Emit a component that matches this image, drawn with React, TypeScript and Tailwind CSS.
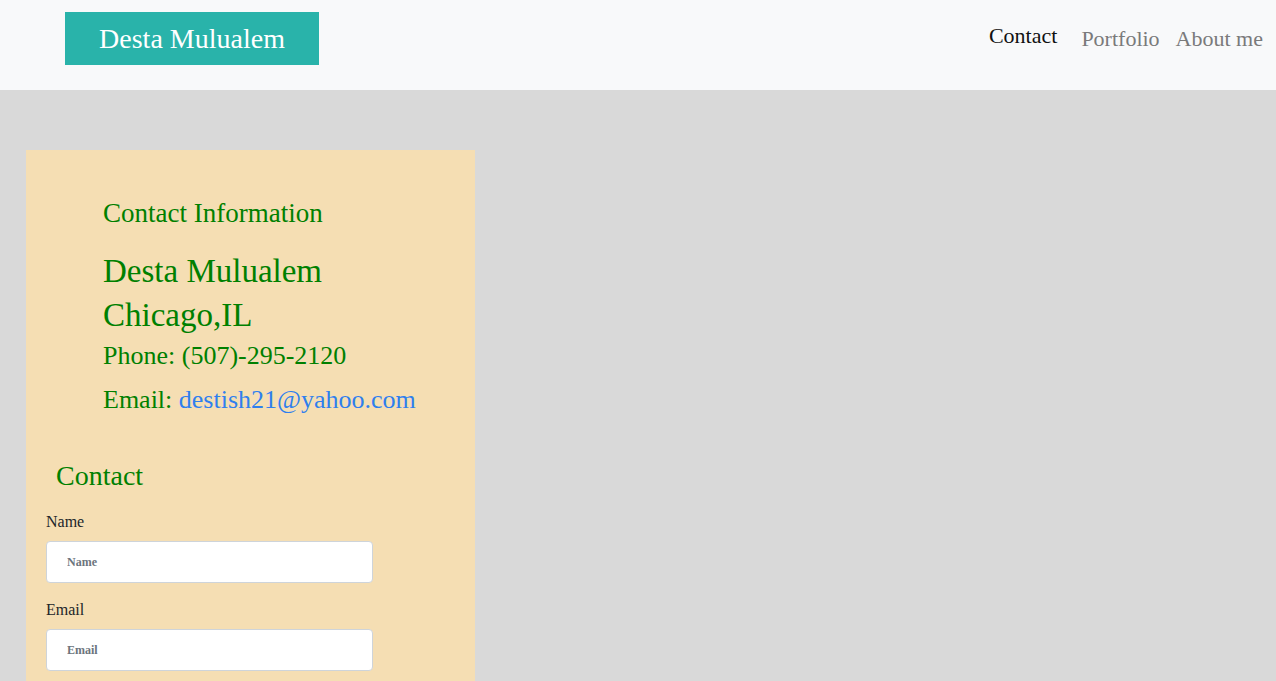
import React from "react";

const serif = { fontFamily: '"Liberation Serif", "Times New Roman", serif' };

function Header() {
  return (
    <header className="flex h-[90px] items-start justify-between bg-[#f8f9fa] pt-[12px]">
      <a className="ml-[65px] flex h-[53px] w-[254px] items-center justify-center bg-[#29b3aa] text-[28px] text-white">
        Desta Mulualem
      </a>
      <nav className="mr-[13px] mt-[10px] flex items-start text-[22px]">
        <a className="mr-[24px] leading-[28px] text-[#111]">Contact</a>
        <a className="mr-[16px] mt-[3px] leading-[28px] text-[#7a7a7a]">Portfolio</a>
        <a className="mt-[3px] leading-[28px] text-[#7a7a7a]">About me</a>
      </nav>
    </header>
  );
}

function Field({ label }: { label: string }) {
  return (
    <div className="flex flex-col">
      <label className="text-[16px] leading-[24px] text-[#212529]">{label}</label>
      <input
        placeholder={label}
        className="mt-[7px] h-[42px] w-[327px] rounded-[4px] border border-[#ced4da] bg-white px-[20px] text-[12px] font-bold text-[#495057] placeholder:text-[#6c757d]"
        style={serif}
      />
    </div>
  );
}

export default function App() {
  return (
    <div className="min-h-[681px] bg-[#d9d9d9]" style={serif}>
      <Header />
      <main className="pt-[60px]">
        <section className="ml-[26px] w-[449px] bg-[#f5deb3] pb-[40px] pt-[49px]">
          <div className="pl-[77px] text-[#008000]">
            <h4 className="text-[27px] leading-[29px]">Contact Information</h4>
            <h2 className="mt-[21px] text-[33px] leading-[44px]">Desta Mulualem</h2>
            <h2 className="text-[33px] leading-[44px]">Chicago,IL</h2>
            <h4 className="text-[26px] leading-[38px]">Phone: (507)-295-2120</h4>
            <h4 className="mt-[6px] text-[26px] leading-[38px]">
              Email: <a className="text-[#2f7fee]">destish21@yahoo.com</a>
            </h4>
          </div>
          <form className="mt-[41px] px-[20px]">
            <h3 className="pl-[10px] text-[28px] leading-[32px] text-[#008000]">Contact</h3>
            <div className="mt-[18px] flex flex-col gap-[15px]">
              <Field label="Name" />
              <Field label="Email" />
            </div>
          </form>
        </section>
      </main>
    </div>
  );
}
